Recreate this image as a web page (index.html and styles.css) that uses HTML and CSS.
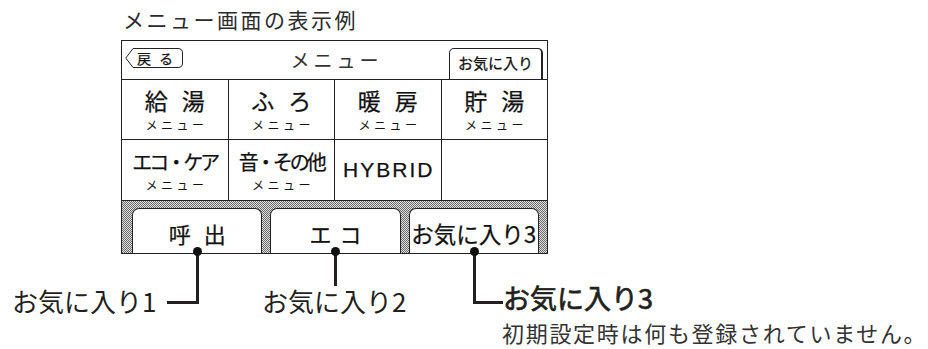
FILE: index.html
```html
<!DOCTYPE html>
<html lang="ja">
<head>
  <meta charset="UTF-8">
  <title>メニュー画面の表示例</title>
  <link rel="stylesheet" href="styles.css">
</head>
<body>

  <div class="figure">
    <p class="caption">メニュー画面の表示例</p>

    <!-- remote control screen -->
    <div class="screen">
      <div class="screen-head">
        <div class="back">
          <svg width="58" height="20" viewBox="0 0 58 20">
            <path d="M8 0.5 H53 Q57.5 0.5 57.5 5 V15 Q57.5 19.5 53 19.5 H8 L0.8 10 Z" fill="none" stroke="#222" stroke-width="1"/>
          </svg>
          <span>戻る</span>
        </div>
        <div class="head-title">メニュー</div>
        <div class="fav-tab">お気に入り</div>
      </div>

      <div class="menu-grid">
        <div class="cell"><span class="cell-main">給湯</span><span class="cell-sub">メニュー</span></div>
        <div class="cell"><span class="cell-main">ふろ</span><span class="cell-sub">メニュー</span></div>
        <div class="cell"><span class="cell-main">暖房</span><span class="cell-sub">メニュー</span></div>
        <div class="cell"><span class="cell-main">貯湯</span><span class="cell-sub">メニュー</span></div>
        <div class="cell"><span class="cell-main tight">エコ・ケア</span><span class="cell-sub">メニュー</span></div>
        <div class="cell"><span class="cell-main tight">音・その他</span><span class="cell-sub">メニュー</span></div>
        <div class="cell"><span class="cell-latin">HYBRID</span></div>
        <div class="cell"></div>
      </div>

      <div class="fav-bar">
        <div class="fav-btn"><span class="call">呼出</span></div>
        <div class="fav-btn"><span class="eco">エコ</span></div>
        <div class="fav-btn"><span class="fav3">お気に入り3</span></div>
      </div>
    </div>

    <!-- leader lines and labels -->
    <div class="lead lead-1"></div>
    <div class="lead lead-2"></div>
    <div class="lead lead-3"></div>
    <div class="dot dot-1"></div>
    <div class="dot dot-2"></div>
    <div class="dot dot-3"></div>

    <div class="label label-1">お気に入り1</div>
    <div class="label label-2">お気に入り2</div>
    <div class="label label-3">お気に入り3</div>
    <div class="label note">初期設定時は何も登録されていません。</div>
  </div>

</body>
</html>
```

FILE: styles.css
```css
body {
  margin: 0;
  background: #fff;
  font-family: "Noto Sans CJK JP", "Noto Sans", sans-serif;
  color: #231f20;
}
.figure {
  position: relative;
  width: 928px;
  height: 349px;
  padding: 9px 0 0 121px;
  box-sizing: border-box;
}
.caption {
  margin: 0 0 10px 2px;
  font-size: 21px;
  line-height: 21px;
  letter-spacing: 2.5px;
  color: #2b2b2b;
}

/* screen */
.screen {
  width: 427px;
  border: 1px solid #222;
  box-sizing: border-box;
  color: #111;
  -webkit-text-stroke: 0.25px #111;
}
.screen-head {
  height: 39px;
  box-sizing: border-box;
  border-bottom: 1px solid #222;
  display: grid;
  grid-template-columns: 1fr auto 1fr;
  padding: 0 3px;
}
.back {
  position: relative;
  width: 58px;
  height: 20px;
  margin-top: 7px;
  display: flex;
  align-items: center;
  font-size: 14px;
  line-height: 14px;
}
.back svg {
  position: absolute;
  left: 0;
  top: 0;
}
.back span {
  position: relative;
  padding-left: 12px;
  letter-spacing: 8px;
}
.head-title {
  align-self: center;
  font-size: 19px;
  line-height: 20px;
  letter-spacing: 4px;
  margin-right: -4px;
  color: #333;
  -webkit-text-stroke: 0;
}
.fav-tab {
  justify-self: end;
  align-self: end;
  width: 94px;
  height: 31px;
  box-sizing: border-box;
  border: 1px solid #222;
  border-right-width: 2px;
  border-bottom: 0;
  border-radius: 5px 5px 0 0;
  margin-right: 1px;
  text-align: center;
  font-size: 15px;
  line-height: 27px;
}

.menu-grid {
  display: grid;
  grid-template-columns: repeat(4, 1fr);
  grid-template-rows: 59px 60px;
  gap: 1px;
  background: #222;
  border-bottom: 1px solid #222;
}
.cell {
  background: #fff;
  display: flex;
  flex-direction: column;
  align-items: center;
  justify-content: center;
}
.cell-main {
  font-size: 23px;
  line-height: 23px;
  letter-spacing: 14px;
  margin-right: -14px;
}
.cell-main.tight {
  font-size: 20px;
  line-height: 20px;
  letter-spacing: -3px;
  margin-right: 0;
  margin-top: 2px;
}
.cell-sub {
  margin-top: 7px;
  font-size: 12px;
  line-height: 12px;
  letter-spacing: 3.5px;
  margin-right: -3.5px;
  -webkit-text-stroke: 0;
}
.cell-latin {
  font-family: "Liberation Sans", Arial, sans-serif;
  font-size: 21px;
  letter-spacing: 2px;
  margin-right: -2px;
}

.fav-bar {
  height: 52px;
  box-sizing: border-box;
  display: flex;
  gap: 8px;
  padding: 7px 8px 0 10px;
  background: repeating-conic-gradient(#6a6a6a 0 25%, #e0e0e0 0 50%) 0 0 / 2px 2px;
}
.fav-btn {
  flex: 1;
  background: #fff;
  border: 1px solid #222;
  border-bottom: 0;
  border-radius: 7px 7px 0 0;
  display: flex;
  align-items: center;
  justify-content: center;
  padding-top: 3px;
  font-size: 22px;
  line-height: 22px;
}
.call {
  letter-spacing: 13px;
  margin-right: -13px;
}
.eco {
  letter-spacing: 8px;
  margin-right: -8px;
}
.fav3 {
  font-size: 22.5px;
}

/* callouts */
.lead {
  position: absolute;
  box-sizing: border-box;
  border: 0 solid #231f20;
}
.lead-1 {
  left: 167px;
  top: 252px;
  width: 32px;
  height: 52px;
  border-right-width: 3px;
  border-bottom-width: 3px;
}
.lead-2 {
  left: 334px;
  top: 252px;
  width: 3px;
  height: 34px;
  background: #231f20;
}
.lead-3 {
  left: 473px;
  top: 252px;
  width: 30px;
  height: 52px;
  border-left-width: 3px;
  border-bottom-width: 3px;
}
.dot {
  position: absolute;
  top: 247px;
  width: 9px;
  height: 9px;
  border-radius: 50%;
  background: #111;
}
.dot-1 { left: 193px; }
.dot-2 { left: 331px; }
.dot-3 { left: 470px; }

.label {
  position: absolute;
  white-space: nowrap;
  font-size: 26px;
  line-height: 26px;
}
.label-1 { left: 12px; top: 288px; }
.label-2 { left: 262px; top: 288px; }
.label-3 {
  left: 503px;
  top: 284px;
  font-size: 27px;
  line-height: 27px;
  -webkit-text-stroke: 0.7px #231f20;
}
.note {
  left: 502px;
  top: 321px;
  font-size: 22px;
  line-height: 22px;
  letter-spacing: 1.7px;
  color: #333;
}
```
